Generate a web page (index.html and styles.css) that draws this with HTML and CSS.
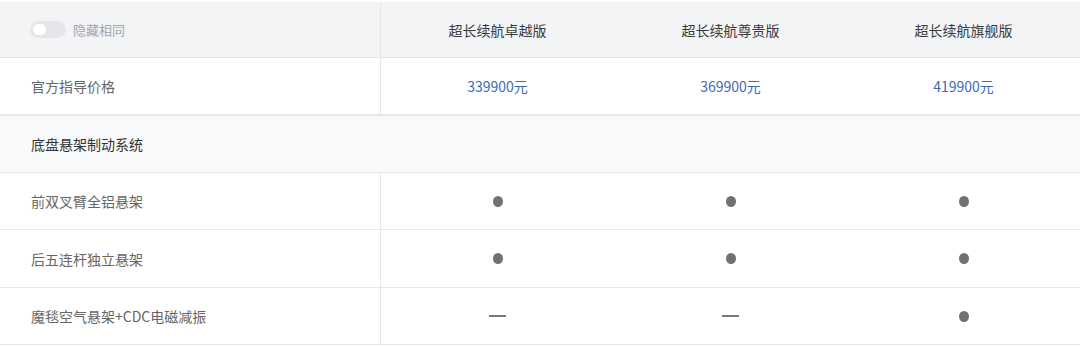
FILE: index.html
```html
<!DOCTYPE html>
<html lang="zh">
<head>
<meta charset="utf-8">
<link rel="stylesheet" href="styles.css">
</head>
<body>
<div class="table">
  <div class="row head">
    <div class="cell label">
      <span class="toggle"><span class="knob"></span></span>
      <span class="toggle-text">隐藏相同</span>
    </div>
    <div class="cell val">超长续航卓越版</div>
    <div class="cell val">超长续航尊贵版</div>
    <div class="cell val">超长续航旗舰版</div>
  </div>
  <div class="row price">
    <div class="cell label">官方指导价格</div>
    <div class="cell val">339900元</div>
    <div class="cell val">369900元</div>
    <div class="cell val">419900元</div>
  </div>
  <div class="row section">
    <div class="cell label">底盘悬架制动系统</div>
  </div>
  <div class="row">
    <div class="cell label">前双叉臂全铝悬架</div>
    <div class="cell val"><span class="dot"></span></div>
    <div class="cell val"><span class="dot"></span></div>
    <div class="cell val"><span class="dot"></span></div>
  </div>
  <div class="row tall">
    <div class="cell label">后五连杆独立悬架</div>
    <div class="cell val"><span class="dot"></span></div>
    <div class="cell val"><span class="dot"></span></div>
    <div class="cell val"><span class="dot"></span></div>
  </div>
  <div class="row">
    <div class="cell label">魔毯空气悬架+CDC电磁减振</div>
    <div class="cell val"><span class="dash"></span></div>
    <div class="cell val"><span class="dash"></span></div>
    <div class="cell val"><span class="dot"></span></div>
  </div>
</div>
</body>
</html>
```

FILE: styles.css
```css
html, body {
  margin: 0;
  padding: 0;
  background: #ffffff;
}
body {
  font-family: "Noto Sans CJK SC", "Noto Sans", sans-serif;
  font-size: 14px;
  color: #666666;
}
.table {
  padding-top: 2px;
  width: 1080px;
}
.row {
  display: grid;
  grid-template-columns: 381px 233px 233px 233px;
  height: 56px;
  border-bottom: 1px solid #e6e6e6;
}
.row.tall {
  height: 57px;
}
.cell {
  display: flex;
  align-items: center;
}
.label {
  padding-left: 31px;
  border-right: 1px solid #e6e6e6;
}
.val {
  justify-content: center;
}
.head {
  background: #f3f4f6;
  height: 55px;
  color: #3a3a3a;
}
.head .label {
  padding-left: 30px;
}
.toggle {
  width: 36px;
  height: 17px;
  border-radius: 9px;
  background: #e4e6ea;
  display: flex;
  align-items: center;
  padding-left: 3px;
  box-sizing: border-box;
}
.knob {
  width: 13px;
  height: 11px;
  border-radius: 6px;
  background: #ffffff;
}
.toggle-text {
  margin-left: 7px;
  font-size: 13px;
  color: #a3a6ad;
}
.price .val {
  color: #3d6bb0;
}
.price {
  border-bottom: 2px solid #e4e6ea;
}
.section {
  background: #f8f9fa;
  color: #333333;
  display: flex;
}
.section .label {
  border-right: none;
}
.dot {
  width: 10px;
  height: 11px;
  border-radius: 50%;
  background: #717171;
}
.dash {
  width: 17px;
  height: 2px;
  background: #7a7a7a;
}
```
